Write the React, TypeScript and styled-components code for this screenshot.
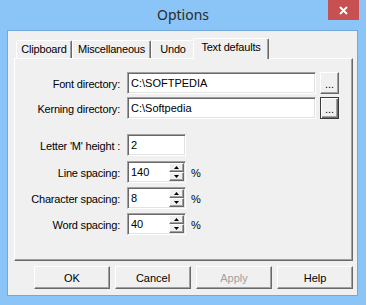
import styled, { createGlobalStyle } from 'styled-components';

const GlobalStyle = createGlobalStyle`
  html, body {
    margin: 0;
    padding: 0;
    background: #8bc5f7;
  }
`;

const Window = styled.div`
  width: 366px;
  height: 305px;
  box-sizing: border-box;
  background: #8bc5f7;
  display: flex;
  flex-direction: column;
  font-family: "Liberation Sans", Arial, sans-serif;
  font-size: 11px;
  color: #000;
`;

const TitleBar = styled.div`
  height: 30px;
  flex: none;
  display: flex;
  align-items: flex-start;
  padding: 0 7px 0 38px;
`;

const Title = styled.div`
  flex: 1;
  text-align: center;
  font-family: "Noto Sans", "Open Sans", sans-serif;
  font-size: 14px;
  line-height: 30px;
  color: #2a2a2a;
`;

const CloseButton = styled.div`
  width: 31px;
  height: 20px;
  background: #c75050;
  display: flex;
  align-items: center;
  justify-content: center;
`;

const Client = styled.div`
  flex: 1;
  margin: 0 8px 9px 7px;
  border: 1px solid #74a8d8;
  background: #f0f0f0;
  padding: 7px 4px 0 6px;
  display: flex;
  flex-direction: column;
`;

const TabStrip = styled.div`
  height: 20px;
  display: flex;
  align-items: flex-end;
  padding-left: 2px;
`;

const Tab = styled.div<{ $w: number; $active?: boolean }>`
  position: relative;
  box-sizing: border-box;
  width: ${p => p.$w}px;
  height: ${p => (p.$active ? 21 : 18)}px;
  margin: ${p => (p.$active ? '0 -2px -1px -2px' : '0')};
  z-index: ${p => (p.$active ? 1 : 0)};
  background: #f0f0f0;
  border: 1px solid;
  border-bottom: none;
  border-color: #fff #696969 transparent #fff;
  box-shadow: inset -1px 0 #a0a0a0;
  border-radius: 2px 2px 0 0;
  text-align: center;
  line-height: ${p => (p.$active ? 16 : 17)}px;
  letter-spacing: -0.2px;
  white-space: nowrap;
`;

const Panel = styled.div`
  height: 203px;
  box-sizing: border-box;
  border: 1px solid;
  border-color: #fff #696969 #696969 #fff;
  box-shadow: inset -1px -1px #a0a0a0;
  padding-top: 13px;
  display: flex;
  flex-direction: column;
`;

const Row = styled.div<{ $top?: number }>`
  display: flex;
  align-items: center;
  height: 22px;
  margin-top: ${p => p.$top || 0}px;
`;

const Label = styled.div`
  width: 105px;
  margin-right: 7px;
  text-align: right;
  letter-spacing: -0.2px;
  white-space: nowrap;
  padding-top: 2px;
`;

const Field = styled.div<{ $w: number }>`
  width: ${p => p.$w}px;
  height: 22px;
  box-sizing: border-box;
  background: #fff;
  border: 1px solid;
  border-color: #a0a0a0 #fff #fff #a0a0a0;
  box-shadow: inset 1px 1px #696969, inset -1px -1px #e3e3e3;
  padding: 1px 1px 1px 3px;
  display: flex;
  align-items: stretch;
`;

const FieldText = styled.div`
  flex: 1;
  display: flex;
  align-items: center;
  white-space: nowrap;
  overflow: hidden;
`;

const Raised = styled.div`
  box-sizing: border-box;
  background: #f0f0f0;
  border: 1px solid;
  border-color: #fff #696969 #696969 #fff;
  box-shadow: inset -1px -1px #a0a0a0;
`;

const BrowseButton = styled(Raised)<{ $focus?: boolean }>`
  width: 19px;
  height: 22px;
  margin-left: 4px;
  display: flex;
  align-items: flex-end;
  justify-content: center;
  line-height: 14px;
  padding-bottom: 2px;
  ${p =>
    p.$focus &&
    `border-color: #3a3a3a;
     box-shadow: inset 1px 1px #fff, inset -1px -1px #696969, inset -2px -2px #a0a0a0;`}
`;

const SpinColumn = styled.div`
  width: 15px;
  display: flex;
  flex-direction: column;
`;

const SpinButton = styled(Raised)`
  flex: 1;
  display: flex;
  align-items: center;
  justify-content: center;
`;

const Unit = styled.div`
  margin-left: 5px;
  padding-top: 2px;
`;

const ButtonRow = styled.div`
  display: flex;
  justify-content: flex-end;
  gap: 5px;
  margin-top: 5px;
`;

const DialogButton = styled(Raised)<{ $disabled?: boolean }>`
  width: 76px;
  height: 23px;
  display: flex;
  align-items: center;
  justify-content: center;
  color: ${p => (p.$disabled ? '#a0a0a0' : '#000')};
`;

const Arrow = ({ up }: { up?: boolean }) => (
  <svg width="5" height="3" viewBox="0 0 5 3">
    <polygon points={up ? '2.5,0 5,3 0,3' : '0,0 5,0 2.5,3'} fill="#000" />
  </svg>
);

const Spinner = ({ value }: { value: string }) => (
  <>
    <Field $w={59}>
      <FieldText>{value}</FieldText>
      <SpinColumn>
        <SpinButton><Arrow up /></SpinButton>
        <SpinButton><Arrow /></SpinButton>
      </SpinColumn>
    </Field>
    <Unit>%</Unit>
  </>
);

const spacing = [
  { label: 'Line spacing:', value: '140', top: 5 },
  { label: 'Character spacing:', value: '8', top: 4 },
  { label: 'Word spacing:', value: '40', top: 4 },
];

export default function App() {
  return (
    <>
      <GlobalStyle />
      <Window>
        <TitleBar>
          <Title>Options</Title>
          <CloseButton>
            <svg width="9" height="9" viewBox="0 0 9 9">
              <path d="M1 1 L8 8 M8 1 L1 8" stroke="#fff" strokeWidth="1.8" />
            </svg>
          </CloseButton>
        </TitleBar>
        <Client>
          <TabStrip>
            <Tab $w={56}>Clipboard</Tab>
            <Tab $w={79}>Miscellaneous</Tab>
            <Tab $w={44}>Undo</Tab>
            <Tab $w={76} $active>Text defaults</Tab>
          </TabStrip>
          <Panel>
            <Row>
              <Label>Font directory:</Label>
              <Field $w={189}><FieldText>C:\SOFTPEDIA</FieldText></Field>
              <BrowseButton>...</BrowseButton>
            </Row>
            <Row $top={3}>
              <Label>Kerning directory:</Label>
              <Field $w={189}><FieldText>C:\Softpedia</FieldText></Field>
              <BrowseButton $focus>...</BrowseButton>
            </Row>
            <Row $top={15}>
              <Label>Letter 'M' height :</Label>
              <Field $w={59}><FieldText>2</FieldText></Field>
            </Row>
            {spacing.map(s => (
              <Row key={s.label} $top={s.top}>
                <Label>{s.label}</Label>
                <Spinner value={s.value} />
              </Row>
            ))}
          </Panel>
          <ButtonRow>
            <DialogButton>OK</DialogButton>
            <DialogButton>Cancel</DialogButton>
            <DialogButton $disabled>Apply</DialogButton>
            <DialogButton>Help</DialogButton>
          </ButtonRow>
        </Client>
      </Window>
    </>
  );
}
